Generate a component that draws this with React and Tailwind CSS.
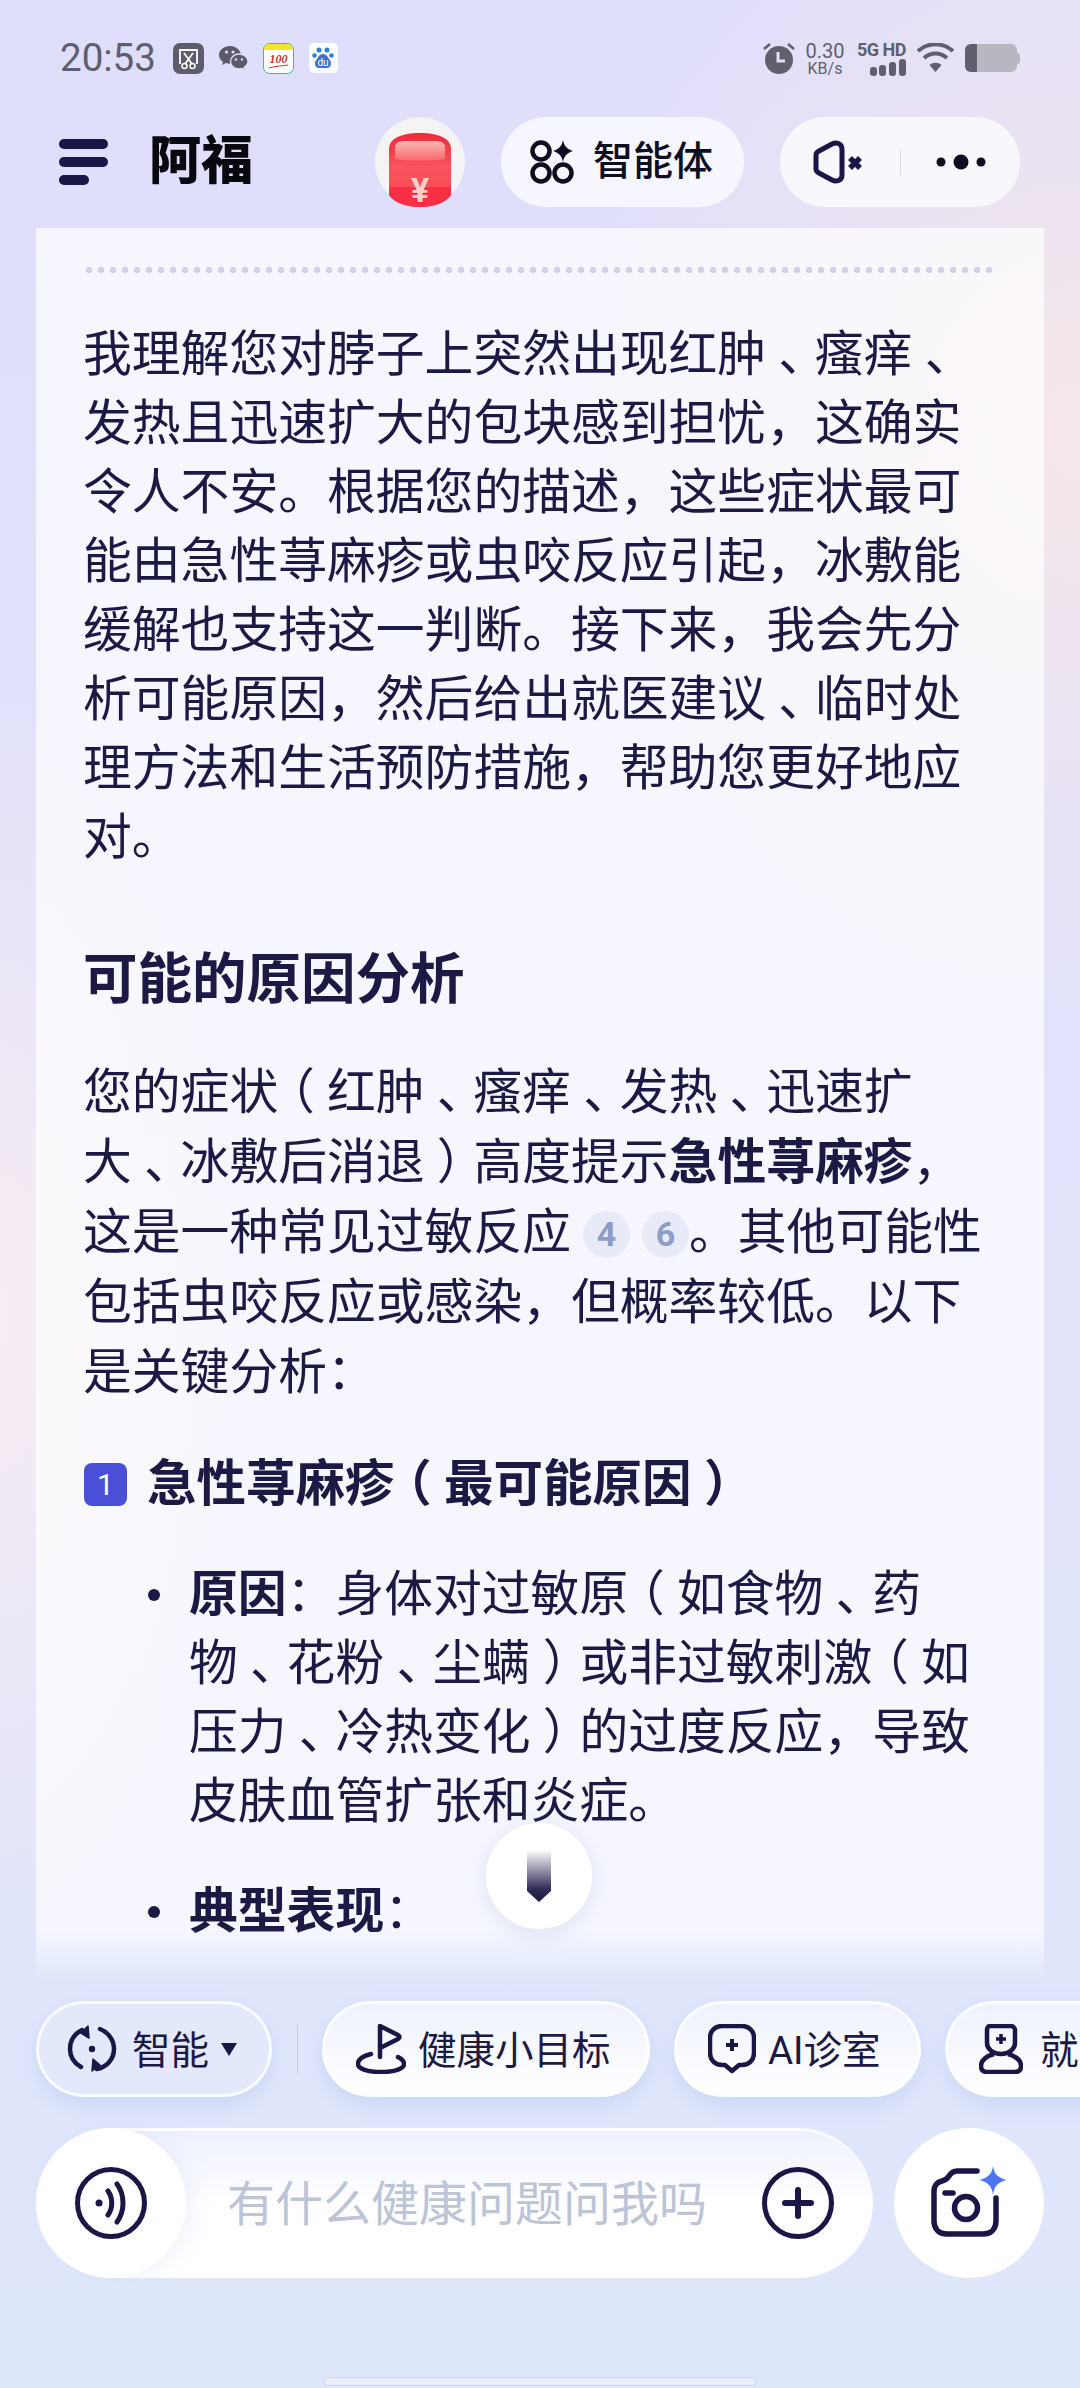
import React from "react";

const ink = "#1a1646";

const firstPara = [
  "我理解您对脖子上突然出现红肿、瘙痒、",
  "发热且迅速扩大的包块感到担忧，这确实",
  "令人不安。根据您的描述，这些症状最可",
  "能由急性荨麻疹或虫咬反应引起，冰敷能",
  "缓解也支持这一判断。接下来，我会先分",
  "析可能原因，然后给出就医建议、临时处",
  "理方法和生活预防措施，帮助您更好地应",
  "对。",
];

// the app's font centres these in the cell, Noto SC pushes them to a side
const Txt = ({ children }) =>
  children.split(/([、（）])/).map((part, i) =>
    part === "、" || part === "（" || part === "）" ? (
      <span key={i} className="inline-block w-[1em] text-center [font-feature-settings:'halt']">{part}</span>
    ) : (
      part
    )
  );

const StatusLeftIcons = () => (
  <div className="flex items-center ml-[17px] gap-[15px]">
    <svg width="31" height="31" viewBox="0 0 31 31">
      <rect width="31" height="31" rx="7" fill="#5c5c6c" />
      <path d="M7 21V7h17v14" fill="none" stroke="#fff" strokeWidth="1.8" />
      <path d="M11 10l8 11M20 10l-8 11" stroke="#5c5c6c" strokeWidth="5" />
      <path d="M11 10l8 11M20 10l-8 11" stroke="#fff" strokeWidth="1.8" />
      <circle cx="11.500" cy="23" r="2.500" fill="#5c5c6c" stroke="#fff" strokeWidth="1.5" />
      <circle cx="19.500" cy="23" r="2.500" fill="#5c5c6c" stroke="#fff" strokeWidth="1.5" />
    </svg>
    <svg width="29" height="26" viewBox="0 0 29 26">
      <path d="M11 1C5 1 0 5 0 10c0 3 1.500 5 4 7l-1 3 4-2c1.500.5 3 .7 4 .7C17 18.700 22 14.500 22 10S17 1 11 1z" fill="#5a5a6a" />
      <path d="M20 9c-5 0-8.500 3.500-8.500 7.500S15 24 20 24c1 0 2-.2 3-.5l3 1.800-.8-3c2.300-1.500 3.800-3.500 3.800-5.800C29 12.500 25 9 20 9z" fill="#5a5a6a" stroke="#dfdffb" strokeWidth="1.400" />
      <circle cx="7.500" cy="7" r="1.500" fill="#dfdffb" />
      <circle cx="14" cy="7" r="1.500" fill="#dfdffb" />
      <circle cx="17" cy="14.500" r="1.200" fill="#dfdffb" />
      <circle cx="23" cy="14.500" r="1.200" fill="#dfdffb" />
    </svg>
    <svg width="31" height="31" viewBox="0 0 31 31">
      <rect x=".5" y=".5" width="30" height="30" rx="6" fill="#fff" stroke="#3fb89a" />
      <path d="M1 7V6a5 5 0 015-5h19a5 5 0 015 5v1z" fill="#f4e52a" />
      <text x="15.500" y="20" textAnchor="middle" fontSize="12" fontStyle="italic" fontWeight="700" fill="#c9372c" fontFamily="Liberation Serif, serif">100</text>
      <path d="M6 25c6-2 13-2 19-3" stroke="#c9372c" strokeWidth="1" fill="none" />
    </svg>
    <svg width="29" height="30" viewBox="0 0 29 30">
      <rect width="29" height="30" rx="5" fill="#fff" />
      <circle cx="10" cy="7" r="2.500" fill="#2f7fd8" />
      <circle cx="18" cy="7" r="2.500" fill="#2f7fd8" />
      <circle cx="5.500" cy="12.500" r="2.300" fill="#2f7fd8" />
      <circle cx="22.500" cy="12.500" r="2.300" fill="#2f7fd8" />
      <path d="M14 11c-4 0-5 4-7 6-2 3-1 8 3 8h8c4 0 5-5 3-8-2-2-3-6-7-6z" fill="#3f6fd0" />
      <text x="14" y="23" textAnchor="middle" fontSize="10" fill="#fff" fontFamily="Roboto, sans-serif">du</text>
    </svg>
  </div>
);

const StatusRightIcons = () => (
  <div className="flex items-center h-[40px] text-[#5f5f6e]">
    <svg width="32" height="34" viewBox="0 0 32 34">
      <circle cx="16" cy="19" r="14" fill="#5f5f6e" />
      <path d="M15 11v9h7" fill="none" stroke="#e2e2f6" strokeWidth="3" />
      <path d="M1 8l6-5M31 8l-6-5" stroke="#5f5f6e" strokeWidth="2.500" />
    </svg>
    <div className="ml-[10px] w-[40px] flex flex-col items-center leading-none">
      <span className="text-[20px] leading-[20px]">0.30</span>
      <span className="text-[16px] leading-[15px]">KB/s</span>
    </div>
    <div className="ml-[9px] w-[52px] flex flex-col items-end leading-none">
      <span className="text-[18px] leading-[17px] font-bold tracking-[-0.5px] whitespace-nowrap">5G HD</span>
      <svg width="36" height="17" viewBox="0 0 36 17" className="mt-[1px]">
        <rect x="0" y="8" width="7" height="9" rx="3" fill="#5f5f6e" />
        <rect x="9" y="6" width="7" height="11" rx="3" fill="#5f5f6e" />
        <rect x="19" y="3" width="7" height="14" rx="3" fill="#5f5f6e" />
        <rect x="29" y="0" width="7" height="17" rx="3" fill="#5f5f6e" />
      </svg>
    </div>
    <svg width="37" height="30" viewBox="0 0 37 30" className="ml-[11px]">
      <path d="M1 8c10-9 25-9 35 0" fill="none" stroke="#5f5f6e" strokeWidth="4" />
      <path d="M7 15c7-6 16-6 23 0" fill="none" stroke="#5f5f6e" strokeWidth="4" />
      <path d="M18.500 29l-6-7c3.500-3 8.500-3 12 0z" fill="#5f5f6e" />
    </svg>
    <div className="ml-[11px] flex items-center">
      <div className="w-[52px] h-[28px] rounded-[6px] bg-[#b7b7c2] overflow-hidden">
        <div className="w-[12px] h-full bg-[#5f5f6e]" />
      </div>
      <div className="w-[3px] h-[11px] rounded-r bg-[#b7b7c2]" />
    </div>
  </div>
);

const RedPacket = () => (
  <svg width="62" height="74" viewBox="0 0 62 74" className="overflow-visible">
    <defs>
      <linearGradient id="rp" x1="0" y1="0" x2="0" y2="1">
        <stop offset="0" stopColor="#ef2b38" />
        <stop offset="0.45" stopColor="#f9535d" />
        <stop offset="1" stopColor="#fb4a55" />
      </linearGradient>
      <linearGradient id="rpShine" x1="0" y1="0" x2="0" y2="1">
        <stop offset="0" stopColor="#fbb8b6" />
        <stop offset="1" stopColor="#f9686c" />
      </linearGradient>
    </defs>
    <path d="M0 16C0 5 13 0 31 0s31 5 31 16v46c-5 8-18 12-31 12S5 70 0 62z" fill="url(#rp)" />
    <path d="M0 54h62v8c-5 8-18 12-31 12S5 70 0 62z" fill="#f92f45" />
    <path d="M6 14c0-4 4-6 9-6h32c5 0 9 2 9 6v12c-9 2-41 2-50 0z" fill="url(#rpShine)" />
    <text x="31" y="69" textAnchor="middle" fontSize="34" fontWeight="700" fill="#fbcfc9" fontFamily="Roboto, sans-serif">¥</text>
  </svg>
);

const AgentIcon = () => (
  <svg width="46" height="46" viewBox="0 0 46 46" fill="none" stroke="#0e0e22" strokeWidth="4.500">
    <circle cx="12" cy="12" r="8.500" />
    <circle cx="12" cy="34" r="8.500" />
    <circle cx="34" cy="34" r="8.500" />
    <path d="M34 1c1 6 4 9 10 11-6 2-9 5-10 11-1-6-4-9-10-11 6-2 9-5 10-11z" fill="#0e0e22" stroke="none" />
  </svg>
);

const MuteIcon = () => (
  <svg width="52" height="44" viewBox="0 0 52 44" fill="none" stroke={ink}>
    <path d="M3 15c0-2 1-3 3-4l13-7c4-2 10-1 10 5v26c0 6-6 7-10 5L6 33c-2-1-3-2-3-4z" strokeWidth="5" strokeLinejoin="round" />
    <path d="M37 18l10 10M47 18L37 28" strokeWidth="5.500" />
  </svg>
);

const SmartIcon = () => (
  <svg width="50" height="50" viewBox="0 0 50 50" fill="none" stroke={ink} strokeWidth="4.500" strokeLinecap="round">
    <path d="M15 6C7 10 3 17 3 25c0 8 4 14 11 18" />
    <path d="M33 5c8 3 14 11 14 20 0 10-7 18-17 20" />
    <path d="M21 2l-7 7 8 5zM25 47l8-6-7-6z" fill={ink} strokeWidth="1.500" strokeLinejoin="round" />
    <circle cx="25" cy="25" r="3.200" fill={ink} stroke="none" />
  </svg>
);

const FlagIcon = () => (
  <svg width="50" height="50" viewBox="0 0 50 50" fill="none" stroke={ink} strokeWidth="4.500" strokeLinecap="round" strokeLinejoin="round">
    <path d="M24 33V2l18 9c2 1 2 3 0 4l-18 9" />
    <path d="M15 30C7 32 2 35 2 40c0 5 10 8 23 8s23-3 23-8c0-3-2-5-6-7" />
  </svg>
);

const ClinicIcon = () => (
  <svg width="48" height="50" viewBox="0 0 48 50" fill="none" stroke={ink} strokeWidth="4.500" strokeLinejoin="round">
    <path d="M14 2h20c7 0 12 5 12 12v15c0 7-5 12-12 12h-3l-7 6-7-6h-3C7 41 2 36 2 29V14C2 7 7 2 14 2z" />
    <path d="M24 15v12M18 21h12" strokeWidth="4" />
  </svg>
);

const DoctorIcon = () => (
  <svg width="44" height="50" viewBox="0 0 44 50" fill="none" stroke={ink} strokeWidth="4.500" strokeLinejoin="round">
    <path d="M11 2h21c2 0 4 2 4 4v13c0 6-6 11-14 11S8 25 8 19V6c0-2 1-4 3-4z" />
    <path d="M15 30C8 32 2 36 2 42c0 4 2 6 6 6h28c4 0 6-2 6-6 0-6-6-10-13-12" />
    <path d="M22 10v10M17 15h10" strokeWidth="3.500" />
  </svg>
);

const VoiceIcon = () => (
  <svg width="72" height="72" viewBox="0 0 72 72" fill="none" stroke={ink} strokeLinecap="round">
    <circle cx="36" cy="36" r="33.500" strokeWidth="5" />
    <circle cx="24" cy="36" r="3.500" fill={ink} stroke="none" />
    <path d="M33 24c5 7 5 17 0 24" strokeWidth="5" />
    <path d="M42 17c8 11 8 27 0 38" strokeWidth="5" />
  </svg>
);

const PlusIcon = () => (
  <svg width="72" height="72" viewBox="0 0 72 72" fill="none" stroke={ink} strokeLinecap="round">
    <circle cx="36" cy="36" r="33.500" strokeWidth="5" />
    <path d="M36 23v26M23 36h26" strokeWidth="6" />
  </svg>
);

const CameraIcon = () => (
  <svg width="76" height="72" viewBox="0 0 76 72" fill="none" stroke={ink} strokeWidth="5.500" strokeLinecap="round">
    <path d="M46 5H26c-4 0-6 2-8 5-2 3-3 4-7 5-5 1-8 5-8 10v30c0 8 5 13 13 13h36c8 0 13-5 13-13V32" />
    <path d="M14 27h8" />
    <circle cx="35" cy="42" r="11.500" />
    <path d="M62 0c1 8 5 12 14 14-9 2-13 6-14 15-1-9-5-13-14-15 9-2 13-6 14-14z" fill="#4f74f0" stroke="none" />
  </svg>
);

const Citation = ({ n }) => (
  <span className="inline-flex items-center justify-center align-middle w-[47px] h-[47px] rounded-full bg-[#e7eaf7] text-[#8d9dc6] text-[34px] font-bold leading-none ml-[12px] -translate-y-[2px]">
    {n}
  </span>
);

const Bullet = () => (
  <span className="mt-[29px] ml-[65px] w-[12px] h-[12px] shrink-0 rounded-full bg-[#1c1a45]" />
);

const Chip = ({ icon, label, className = "" }) => (
  <div className={`h-[96px] shrink-0 rounded-full flex items-center border-[3px] border-white/80 bg-gradient-to-b from-[#eff2fd] to-white shadow-[0_8px_20px_rgba(160,180,235,0.3)] ${className}`}>
    {icon}
    <span className="text-[38.500px] pt-[3px] text-[#1c1a45] whitespace-nowrap">{label}</span>
  </div>
);

export default function App() {
  return (
    <div className="relative w-[1080px] h-[2388px] overflow-hidden flex flex-col font-['Roboto','Noto_Sans_CJK_SC',sans-serif] text-[#1c1a45] bg-[radial-gradient(ellipse_520px_600px_at_100%_18%,#f6e7ea_0%,transparent_100%),radial-gradient(ellipse_240px_640px_at_0%_55%,#f8ecf2_0%,transparent_100%),linear-gradient(180deg,#dfdefb_0%,#e1e3fb_55%,#dfe7fb_100%)]">
      {/* status bar */}
      <div className="h-[117px] shrink-0 flex items-start justify-between pl-[60px] pr-[60px] pt-[38px]">
        <div className="flex items-center h-[40px]">
          <span className="text-[38.500px] leading-none text-[#5e5e70]">20:53</span>
          <StatusLeftIcons />
        </div>
        <StatusRightIcons />
      </div>

      {/* header */}
      <div className="h-[90px] shrink-0 flex items-center pl-[59px] pr-[60px]">
        <svg width="49" height="46" viewBox="0 0 49 46" fill={ink} className="shrink-0">
          <rect y="0" width="49" height="10" rx="5" />
          <rect y="18" width="49" height="10" rx="5" />
          <rect y="36" width="30" height="10" rx="5" />
        </svg>
        <span className="ml-[41px] w-[105px] shrink-0 text-[52px] font-black text-[#08080f] leading-none whitespace-nowrap">阿福</span>
        <div className="ml-[121px] w-[90px] h-[90px] shrink-0 rounded-full bg-[#f6f3f4] flex justify-center pt-[16px]">
          <RedPacket />
        </div>
        <div className="ml-[36px] w-[243px] h-[90px] shrink-0 rounded-full bg-[#f6f6fe] flex items-center pl-[28px] gap-[18px]">
          <AgentIcon />
          <span className="text-[40px] font-medium text-[#0e0e22] whitespace-nowrap">智能体</span>
        </div>
        <div className="ml-[36px] w-[240px] h-[90px] shrink-0 rounded-full bg-[#f8f7fc] flex items-center pl-[33px]">
          <MuteIcon />
          <div className="ml-[35px] w-[1px] h-[26px] bg-[#d8d8e0]" />
          <svg width="50" height="16" viewBox="0 0 50 16" className="ml-[35px]" fill="#0e0e22">
            <circle cx="5" cy="8" r="4.500" />
            <circle cx="25" cy="8" r="7.500" />
            <circle cx="45" cy="8" r="4.500" />
          </svg>
        </div>
      </div>

      {/* chat card */}
      <div className="relative mt-[21px] ml-[36px] w-[1008px] flex-1 min-h-0 overflow-hidden bg-white/70 pl-[47px] text-[48.800px] whitespace-nowrap">
        <div className="mt-[39px] w-[911px] h-[6px] bg-[radial-gradient(circle,#cfd2e6_3px,transparent_3.500px)] bg-[length:12px_6px]" />

        <p className="mt-[47px] leading-[69px]">
          {firstPara.map((line) => (
            <span key={line} className="block"><Txt>{line}</Txt></span>
          ))}
        </p>

        <h2 className="mt-[72px] text-[54.500px] leading-[70px] font-bold">可能的原因分析</h2>

        <p className="mt-[44px] leading-[70px]">
          <span className="block"><Txt>您的症状（红肿、瘙痒、发热、迅速扩</Txt></span>
          <span className="block"><Txt>大、冰敷后消退）高度提示</Txt><b className="font-bold">急性荨麻疹</b>，</span>
          <span className="block">这是一种常见过敏反应<Citation n="4" /><Citation n="6" />。其他可能性</span>
          <span className="block">包括虫咬反应或感染，但概率较低。以下</span>
          <span className="block">是关键分析：</span>
        </p>

        <div className="mt-[41px] h-[70px] flex items-center">
          <span className="w-[43px] h-[43px] ml-[1px] rounded-[8px] bg-[#4a4fd8] text-white text-[30px] flex items-center justify-center">1</span>
          <span className="ml-[20px] font-bold leading-[70px] text-[49.500px]"><Txt>急性荨麻疹（最可能原因）</Txt></span>
        </div>

        <div className="mt-[41px] flex items-start">
          <Bullet />
          <p className="ml-[29px] leading-[69px]">
            <span className="block"><b className="font-bold">原因</b><Txt>：身体对过敏原（如食物、药</Txt></span>
            <span className="block"><Txt>物、花粉、尘螨）或非过敏刺激（如</Txt></span>
            <span className="block"><Txt>压力、冷热变化）的过度反应，导致</Txt></span>
            <span className="block">皮肤血管扩张和炎症。</span>
          </p>
        </div>

        <div className="mt-[41px] flex items-start">
          <Bullet />
          <p className="ml-[29px] leading-[69px]"><b className="font-bold">典型表现</b>：</p>
        </div>

        <div className="absolute left-0 right-0 bottom-0 h-[50px] bg-gradient-to-b from-transparent to-[#e0e7fb]" />
      </div>

      {/* scroll to bottom */}
      <div className="absolute left-[486px] top-[1823px] w-[106px] h-[106px] rounded-full bg-white shadow-[0_4px_24px_rgba(150,160,210,0.25)] flex items-center justify-center">
        <svg width="24" height="52" viewBox="0 0 24 52">
          <defs>
            <linearGradient id="arrowFade" x1="0" y1="0" x2="0" y2="1">
              <stop offset="0" stopColor={ink} stopOpacity="0" />
              <stop offset="0.75" stopColor={ink} stopOpacity="0.9" />
              <stop offset="1" stopColor={ink} />
            </linearGradient>
          </defs>
          <path d="M0 0h24v41L12 52 0 41z" fill="url(#arrowFade)" />
        </svg>
      </div>

      {/* quick actions + input */}
      <div className="shrink-0 pt-[22px] pb-[110px]">
        <div className="flex items-center pl-[36px]">
          <div className="w-[236px] h-[96px] shrink-0 rounded-full flex items-center pl-[28px] border-[3px] border-white/80 bg-[#e3e9fb] shadow-[0_8px_20px_rgba(160,180,235,0.3)]">
            <SmartIcon />
            <span className="ml-[15px] text-[38.500px] pt-[3px] whitespace-nowrap">智能</span>
            <svg width="18" height="15" viewBox="0 0 18 15" fill={ink} className="ml-[11px]">
              <path d="M1 1h16L9 14z" />
            </svg>
          </div>
          <div className="ml-[25px] w-[1px] h-[48px] bg-[#c5cbe0] shrink-0" />
          <Chip className="ml-[24px] w-[328px] pl-[31px] gap-[12px]" icon={<FlagIcon />} label="健康小目标" />
          <Chip className="ml-[24px] w-[247px] pl-[31px] gap-[12px]" icon={<ClinicIcon />} label="AI诊室" />
          <Chip className="ml-[24px] w-[200px] pl-[31px] gap-[17px]" icon={<DoctorIcon />} label="就" />
        </div>

        <div className="mt-[31px] ml-[36px] flex items-center">
          <div className="relative w-[837px] h-[150px] rounded-full border-t-[3px] border-white/80 bg-gradient-to-b from-[#eef1fd] via-white to-white flex items-center">
            <div className="w-[150px] h-[150px] -mt-[3px] shrink-0 rounded-full bg-white shadow-[8px_0_20px_rgba(200,210,240,0.25)] flex items-center justify-center">
              <VoiceIcon />
            </div>
            <span className="ml-[41px] text-[48px] text-[#bcc4d6] whitespace-nowrap">有什么健康问题问我吗</span>
            <div className="absolute right-[39px] top-[36px]">
              <PlusIcon />
            </div>
          </div>
          <div className="ml-[21px] w-[150px] h-[150px] rounded-full bg-white flex items-center justify-center pb-[2px]">
            <CameraIcon />
          </div>
        </div>
      </div>

      {/* home indicator */}
      <div className="absolute left-[323px] top-[2377px] w-[434px] h-[9px] rounded-full bg-[#eceffb] border border-[#cdd3e8]" />
    </div>
  );
}
